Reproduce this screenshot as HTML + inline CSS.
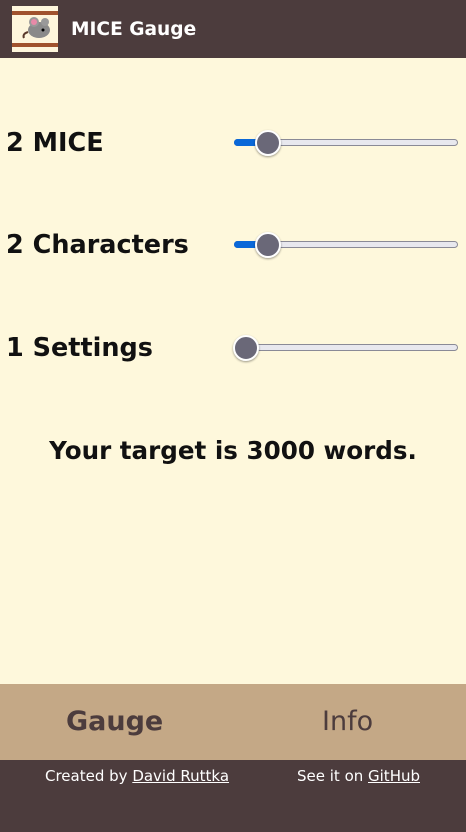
<!DOCTYPE html>
<html><head><style>
body{margin:0;width:466px;height:832px;background:#fef8dc;font-family:"DejaVu Sans",sans-serif;position:relative;overflow:hidden}
.hdr{position:absolute;left:0;top:0;width:466px;height:58px;background:#4c3c3d}
.logo{position:absolute;left:12px;top:6px;width:46px;height:46px;background:#fef6dc}
.hdr .t{position:absolute;left:71px;top:19px;color:#fff;font-weight:bold;font-size:18.6px}
.lab{position:absolute;left:6px;font-weight:bold;font-size:25.5px;color:#111}
.track{position:absolute;left:234px;width:224px;height:7px;border:1px solid #8a8a96;border-radius:4px;background:#e8e8ee;box-sizing:border-box}
.fill{position:absolute;left:234px;height:7px;background:#0a68d8;border-radius:4px 0 0 4px}
.thumb{position:absolute;width:22px;height:22px;border-radius:50%;background:#6a6878;border:2px solid #fff;box-shadow:0 1px 2px rgba(0,0,0,.4)}
.target{position:absolute;left:0;width:466px;top:436px;text-align:center;font-weight:bold;font-size:24.6px;color:#111}
.tabs{position:absolute;left:0;top:684px;width:466px;height:76px;background:#c4a886;color:#4c3c3d;font-size:27px}
.tabs span{position:absolute;top:22px}
.ft{position:absolute;left:0;top:760px;width:466px;height:72px;background:#4c3c3d;color:#fff;font-size:15px}
.ft span{position:absolute;top:7px}
.ft u{color:#fff}
</style></head><body>
<div class="hdr"><div class="logo">
<svg width="46" height="46" viewBox="0 0 46 46"><rect x="0" y="5" width="46" height="4" fill="#a0522d"/><rect x="0" y="37" width="46" height="4" fill="#a0522d"/>
<ellipse cx="27" cy="24" rx="11" ry="8" fill="#8a8a8a"/><circle cx="22" cy="16" r="5" fill="#999"/><circle cx="22" cy="16" r="3" fill="#e88aa8"/><circle cx="33" cy="16" r="4" fill="#999"/><circle cx="31" cy="24" r="1.5" fill="#000"/><path d="M16 26 Q10 28 12 32" stroke="#5a3a2a" stroke-width="2" fill="none"/></svg></div>
<div class="t">MICE Gauge</div></div>
<div class="lab" style="top:128px">2 MICE</div>
<div class="track" style="top:139px"></div><div class="fill" style="top:139px;width:30px"></div><div class="thumb" style="left:255px;top:130px"></div>
<div class="lab" style="top:230px">2 Characters</div>
<div class="track" style="top:241px"></div><div class="fill" style="top:241px;width:30px"></div><div class="thumb" style="left:255px;top:232px"></div>
<div class="lab" style="top:333px">1 Settings</div>
<div class="track" style="top:344px"></div><div class="thumb" style="left:233px;top:335px"></div>
<div class="target">Your target is 3000 words.</div>
<div class="tabs"><span style="left:66px;font-weight:bold">Gauge</span><span style="left:322px">Info</span></div>
<div class="ft"><span style="left:45px">Created by <u>David Ruttka</u></span><span style="left:297px">See it on <u>GitHub</u></span></div>
</body></html>
